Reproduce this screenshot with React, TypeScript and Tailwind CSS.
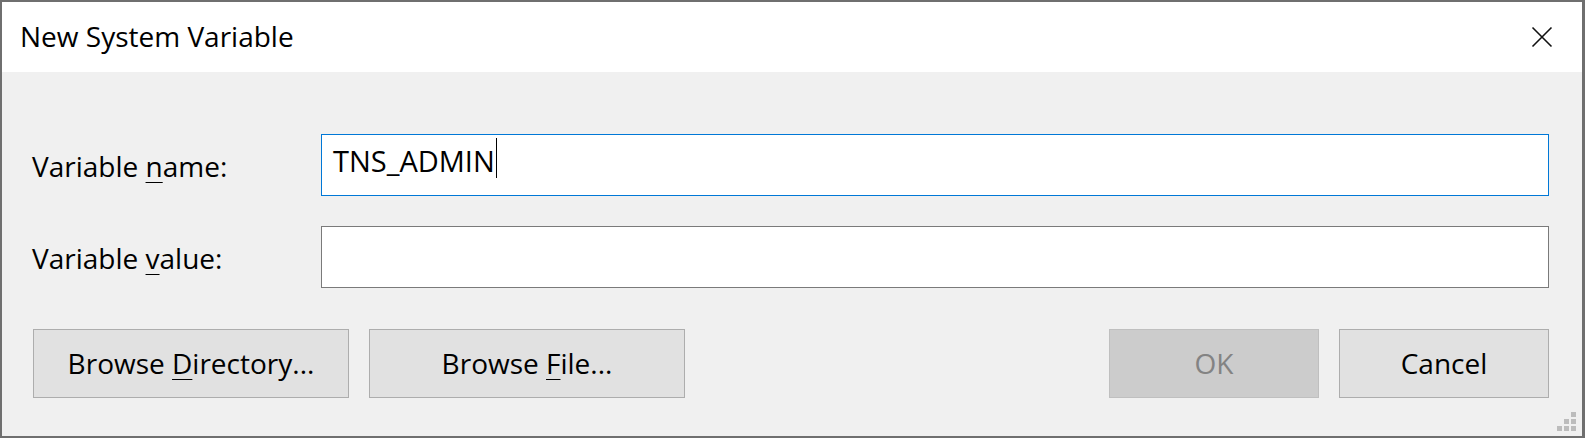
import React from 'react'

const font = { fontFamily: '"Open Sans", "Noto Sans", sans-serif' }

function CloseIcon() {
  return (
    <svg width="22" height="22" viewBox="0 0 22 22" fill="none">
      <path d="M1.5 1.5 L20.5 20.5 M20.5 1.5 L1.5 20.5" stroke="#111" strokeWidth="1.6" />
    </svg>
  )
}

function Field({ label, mnemonic, rest, focused, value }: {
  label: string
  mnemonic: string
  rest: string
  focused?: boolean
  value?: string
}) {
  return (
    <div className="flex items-center">
      <div className="w-[289px] shrink-0 text-[28px] leading-none text-black pt-[2px]">
        {label}<u className="underline decoration-1 underline-offset-[5px]">{mnemonic}</u>{rest}
      </div>
      <div
        className={
          'flex-1 h-[62px] bg-white border px-[11px] pt-[7px] flex items-start ' +
          (focused ? 'border-[#0078d7]' : 'border-[#7a7a7a]')
        }
      >
        {value && (
          <div className="flex items-start">
            <span className="text-[29px] leading-[38px] text-black">{value}</span>
            <span className="w-[1.5px] h-[40px] bg-black ml-[1px] -mt-[4px]" />
          </div>
        )}
      </div>
    </div>
  )
}

function Button({ children, w, disabled }: { children: React.ReactNode; w: string; disabled?: boolean }) {
  return (
    <div
      className={
        'h-[69px] border flex items-center justify-center text-[28px] leading-none pb-[1px] ' +
        w + ' ' +
        (disabled
          ? 'bg-[#cccccc] border-[#bfbfbf] text-[#838383]'
          : 'bg-[#e1e1e1] border-[#adadad] text-black')
      }
    >
      {children}
    </div>
  )
}

export default function App() {
  return (
    <div style={font} className="w-[1585px] h-[438px] bg-[#6f6f6f] p-[2px] pr-[3px] flex flex-col overflow-hidden">
      {/* Title bar */}
      <div className="h-[70px] shrink-0 bg-white flex items-center pl-[18px] pr-[29px]">
        <div className="flex-1 text-[28px] leading-none text-black -mt-[2px]">New System Variable</div>
        <CloseIcon />
      </div>

      {/* Body */}
      <div className="relative flex-1 bg-[#f0f0f0] pl-[30px] pr-[33px] pt-[62px] flex flex-col">
        <div className="flex flex-col gap-[30px]">
          <Field label="Variable " mnemonic="n" rest="ame:" focused value="TNS_ADMIN" />
          <Field label="Variable " mnemonic="v" rest="alue:" />
        </div>

        <div className="mt-[41px] flex items-center pl-[1px]">
          <div className="flex gap-[20px]">
            <Button w="w-[316px]">
              Browse&nbsp;<u className="underline decoration-1 underline-offset-[5px]">D</u>irectory...
            </Button>
            <Button w="w-[316px]">
              Browse&nbsp;<u className="underline decoration-1 underline-offset-[5px]">F</u>ile...
            </Button>
          </div>
          <div className="flex-1" />
          <div className="flex gap-[20px]">
            <Button w="w-[210px]" disabled>OK</Button>
            <Button w="w-[210px]">Cancel</Button>
          </div>
        </div>

        {/* Resize grip */}
        <div className="absolute right-[6px] bottom-[5px] grid grid-cols-3 gap-[2px]">
          <span className="w-[5px] h-[5px]" />
          <span className="w-[5px] h-[5px]" />
          <span className="w-[5px] h-[5px] bg-[#bcbcbc]" />
          <span className="w-[5px] h-[5px]" />
          <span className="w-[5px] h-[5px] bg-[#bcbcbc]" />
          <span className="w-[5px] h-[5px] bg-[#bcbcbc]" />
          <span className="w-[5px] h-[5px] bg-[#bcbcbc]" />
          <span className="w-[5px] h-[5px] bg-[#bcbcbc]" />
          <span className="w-[5px] h-[5px] bg-[#bcbcbc]" />
        </div>
      </div>
    </div>
  )
}
